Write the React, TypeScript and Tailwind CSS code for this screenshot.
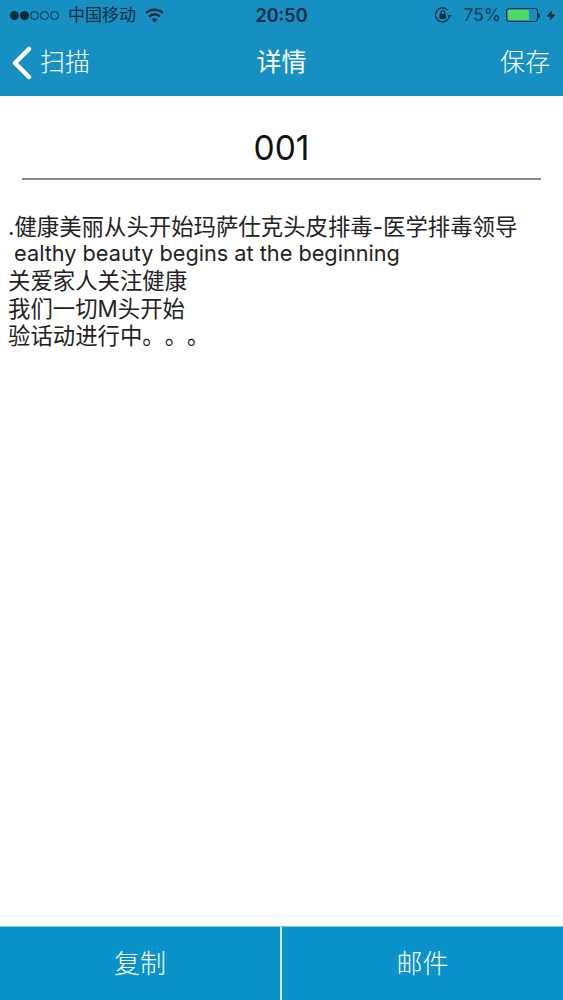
import { Zap } from "lucide-react";

const cjk = "font-['Inter','Noto_Sans_CJK_SC',sans-serif]";

function Signal() {
  return (
    <div className="flex items-center gap-[1px]">
      <span className="w-[9px] h-[9px] rounded-full bg-[#0b2a3d]" />
      <span className="w-[9px] h-[9px] rounded-full bg-[#0b2a3d]" />
      <span className="w-[9px] h-[9px] rounded-full border border-[#0b2a3d]" />
      <span className="w-[9px] h-[9px] rounded-full border border-[#0b2a3d]" />
      <span className="w-[9px] h-[9px] rounded-full border border-[#0b2a3d]" />
    </div>
  );
}

function WifiFan() {
  return (
    <svg width="19" height="15" viewBox="0 0 18 14" fill="none" stroke="#0b2a3d" strokeWidth="2.2">
      <path d="M1 4.6a11.5 11.5 0 0 1 16 0" />
      <path d="M4 8a7.2 7.2 0 0 1 10 0" />
      <path d="M9 13.6 6.4 10.8a3.7 3.7 0 0 1 5.2 0z" fill="#0b2a3d" stroke="none" />
    </svg>
  );
}

function RotationLock() {
  return (
    <svg width="18" height="18" viewBox="0 0 18 18" fill="none">
      <path d="M15.5 9a7 7 0 1 1-2-5" stroke="#0b2a3d" strokeWidth="1.2" />
      <path d="M17.8 9h-4.4l2.2 2.5z" fill="#0b2a3d" />
      <rect x="5.5" y="8" width="6.5" height="5" rx="0.8" fill="#0b2a3d" />
      <path d="M7 8V6.5a1.8 1.8 0 0 1 3.6 0V8" stroke="#0b2a3d" strokeWidth="1.1" />
    </svg>
  );
}

function Battery() {
  return (
    <div className="flex items-center">
      <div className="w-[32px] h-[14px] rounded-[3px] border border-[#0b2a3d] p-[1px]">
        <div className="h-full w-[75%] bg-[#4cd964] rounded-[1px]" />
      </div>
      <div className="w-[2px] h-[5px] bg-[#0b2a3d] rounded-r-sm" />
    </div>
  );
}

function BackChevron() {
  return (
    <svg width="22" height="34" viewBox="0 0 22 34" fill="none" stroke="white" strokeWidth="4.5" strokeLinecap="round" strokeLinejoin="round">
      <path d="M18 3 4 17l14 14" />
    </svg>
  );
}

export default function App() {
  return (
    <div className={`w-[563px] h-[1000px] flex flex-col bg-white ${cjk}`}>
      <header className="h-[96px] shrink-0 bg-[#1690c2] text-white">
        <div className="h-[30px] flex items-center pl-[10px] pr-[7px] text-[#0b2a3d] relative">
          <Signal />
          <span className="ml-[9px] text-[17px] leading-none">中国移动</span>
          <span className="ml-[9px]">
            <WifiFan />
          </span>
          <span className="absolute left-1/2 -translate-x-1/2 text-[18px] font-semibold">20:50</span>
          <div className="ml-auto flex items-center">
            <RotationLock />
            <span className="ml-[11px] text-[17.5px] mr-[5px] text-[#0e3a55]">75%</span>
            <Battery />
            <Zap className="ml-[6px] w-[10px] h-[15px] fill-[#0b2a3d] text-[#0b2a3d]" />
          </div>
        </div>
        <div className="h-[66px] flex items-center justify-between relative">
          <div className="flex items-center">
            <span className="ml-[11px]">
              <BackChevron />
            </span>
            <span className="text-[25px] font-light ml-[7px]">扫描</span>
          </div>
          <span className="absolute left-1/2 -translate-x-1/2 text-[25px]">详情</span>
          <span className="text-[25px] font-light pr-[13px]">保存</span>
        </div>
      </header>

      <main className="flex-1 px-[8px]">
        <div className="ml-[14px] mr-[14px] h-[84px] border-b-2 border-[#8a8a8a] flex items-center justify-center text-[33.5px] text-[#111] pt-[23px]">
          001
        </div>
        <div className="pt-[33px] text-[22.4px] leading-[27.2px] text-[#222] whitespace-pre [text-spacing-trim:space-all]">
          <p>.健康美丽从头开始玛萨仕克头皮排毒-医学排毒领导</p>
          <p className="text-[21.7px]"> ealthy beauty begins at the beginning</p>
          <p>关爱家人关注健康</p>
          <p>我们一切M头开始</p>
          <p>验话动进行中。。。</p>
        </div>
      </main>

      <footer className="h-[74px] shrink-0 bg-[#0a92cb] border-t border-[#7cc8e6] flex text-white text-[26px] font-light">
        <button className="flex-1 border-r-2 border-[#cfe9f4] pb-[1px]">复制</button>
        <button className="w-[281px] pb-[1px]">邮件</button>
      </footer>
    </div>
  );
}
